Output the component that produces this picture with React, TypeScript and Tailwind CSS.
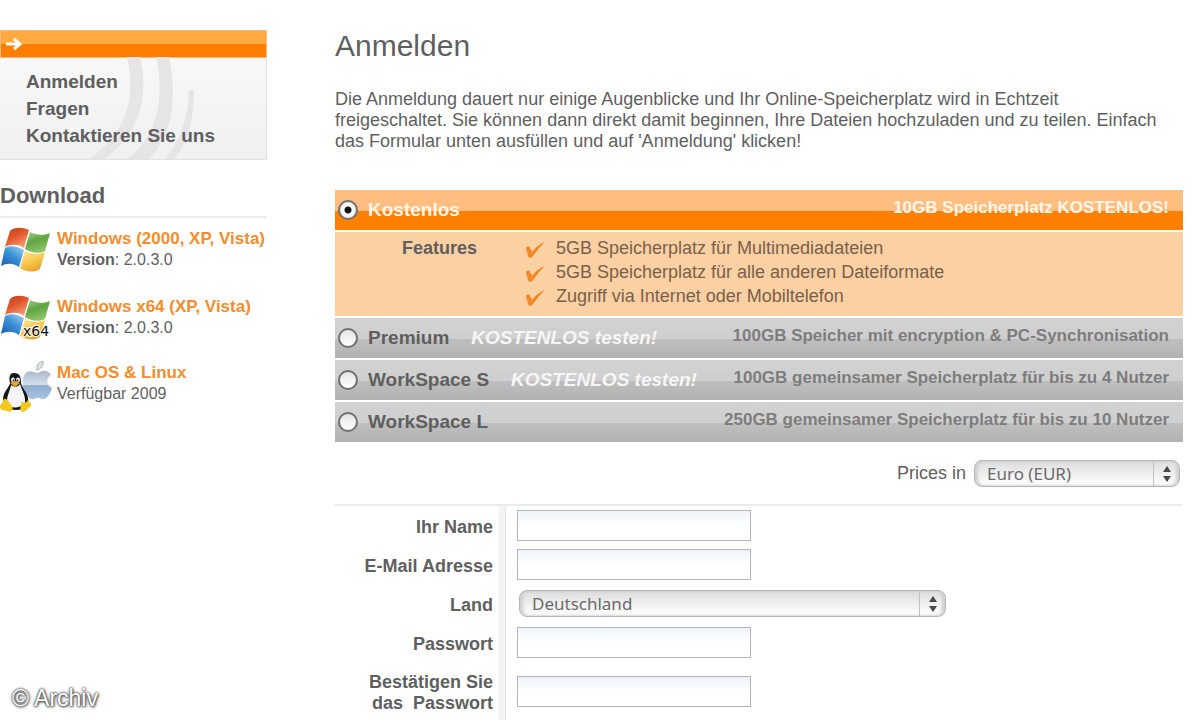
import React, { useState } from "react";

type Plan = {
  id: string;
  name: string;
  trial: boolean;
  summary: string;
};

const navLinks = ["Anmelden", "Fragen", "Kontaktieren Sie uns"];

const features = [
  "5GB Speicherplatz für Multimediadateien",
  "5GB Speicherplatz für alle anderen Dateiformate",
  "Zugriff via Internet oder Mobiltelefon",
];

const plans: Plan[] = [
  {
    id: "premium",
    name: "Premium",
    trial: true,
    summary: "100GB Speicher mit encryption & PC-Synchronisation",
  },
  {
    id: "workspace-s",
    name: "WorkSpace S",
    trial: true,
    summary: "100GB gemeinsamer Speicherplatz für bis zu 4 Nutzer",
  },
  {
    id: "workspace-l",
    name: "WorkSpace L",
    trial: false,
    summary: "250GB gemeinsamer Speicherplatz für bis zu 10 Nutzer",
  },
];

const WindowsLogo = ({ x64 = false }: { x64?: boolean }) => (
  <svg viewBox="0 0 52 48" className="h-12 w-[52px] shrink-0" aria-hidden="true">
    <defs>
      <linearGradient id="winRed" x1="0" y1="0" x2="0.6" y2="1">
        <stop offset="0" stopColor="#b8401c" />
        <stop offset="0.5" stopColor="#e2572c" />
        <stop offset="1" stopColor="#f79a70" />
      </linearGradient>
      <linearGradient id="winGreen" x1="0" y1="0" x2="0.4" y2="1">
        <stop offset="0" stopColor="#a5cf85" />
        <stop offset="0.5" stopColor="#5fa541" />
        <stop offset="1" stopColor="#8cc46a" />
      </linearGradient>
      <linearGradient id="winBlue" x1="1" y1="0" x2="0.2" y2="1">
        <stop offset="0" stopColor="#a9d4f2" />
        <stop offset="0.5" stopColor="#3c93d8" />
        <stop offset="1" stopColor="#1d62b0" />
      </linearGradient>
      <linearGradient id="winYellow" x1="0" y1="0" x2="0.5" y2="1">
        <stop offset="0" stopColor="#fbe9a2" />
        <stop offset="0.6" stopColor="#f9c84a" />
        <stop offset="1" stopColor="#e8a32c" />
      </linearGradient>
    </defs>
    <path
      d="M10 5C14 1 22 1 29 4L24 22C18 18 12 18 5 21Z"
      fill="url(#winRed)"
    />
    <path
      d="M30 6C36 9 43 10 50 7L45 25C39 28 31 27 25 23Z"
      fill="url(#winGreen)"
    />
    <path
      d="M5 22C11 19 17 20 24 24L19 41C13 37 7 37 1 40Z"
      fill="url(#winBlue)"
    />
    <path
      d="M25 25C31 28 38 29 45 26L40 43C34 47 26 46 20 42Z"
      fill="url(#winYellow)"
    />
    {x64 && (
      <text
        x="23"
        y="42"
        fontFamily="DejaVu Sans, sans-serif"
        fontSize="14"
        fill="#111"
        stroke="#fff"
        strokeWidth="2"
        paintOrder="stroke"
      >
        x64
      </text>
    )}
  </svg>
);

const MacLinuxLogo = () => (
  <svg viewBox="0 0 52 54" className="h-[54px] w-[52px] shrink-0" aria-hidden="true">
    <defs>
      <linearGradient id="apple" x1="0" y1="0" x2="0" y2="1">
        <stop offset="0" stopColor="#aab9cc" />
        <stop offset="0.5" stopColor="#d2dfec" />
        <stop offset="0.52" stopColor="#93aece" />
        <stop offset="1" stopColor="#a8c3df" />
      </linearGradient>
    </defs>
    <path d="M37 10C36 5 39 2 43 1C44 5 41 9 37 10Z" fill="#dce3e8" stroke="#a3adb5" />
    <path
      d="M37 13C40 13 42 10 45 11C48 11 50 13 51 15C46 18 46 25 52 28C50 34 47 39 43 39C41 39 39 37 37 38C34 39 32 40 29 38C23 33 20 21 25 14C29 9 33 12 37 13Z"
      fill="url(#apple)"
    />
    <path
      d="M14 13C9 13 9 18 10 23C10 27 3 31 3 40C4 47 8 50 16 50C25 50 29 46 28 38C27 32 22 28 21 23C21 17 20 13 14 13Z"
      fill="#161616"
    />
    <path
      d="M11 25C15 28 18 27 20 24C22 31 26 36 25 43C21 48 12 49 8 45C5 38 10 32 11 25Z"
      fill="#f4f4f4"
    />
    <ellipse cx="13" cy="20" rx="2" ry="2.4" fill="#eee" />
    <ellipse cx="18" cy="20" rx="2" ry="2.4" fill="#eee" />
    <circle cx="13.5" cy="20.5" r="0.9" fill="#111" />
    <circle cx="17.5" cy="20.5" r="0.9" fill="#111" />
    <path d="M10 23L15 21L20 23L15 27Z" fill="#e9a51c" />
    <path
      d="M4 39C7 38 9 43 12 46C14 50 11 53 7 51C3 50 0 50 0 47C0 44 2 44 4 39Z"
      fill="#f2c81d"
    />
    <path
      d="M22 41C24 44 26 43 28 40C30 43 32 44 31 46C28 48 26 52 22 52C19 50 21 45 22 41Z"
      fill="#f2c81d"
    />
  </svg>
);

const CheckMark = () => (
  <svg viewBox="0 0 20 18" className="mt-1 h-[18px] w-5 shrink-0" aria-hidden="true">
    <path
      d="M0 8C1 6 4 6 4 8L6 12C9 8 13 4 19 2C14 6 11 11 7 16C6 18 2 18 2 16Z"
      fill="#f08a26"
    />
  </svg>
);

const Swoosh = () => (
  <svg
    viewBox="0 0 110 102"
    className="absolute right-[66px] bottom-0 h-[102px] w-[110px]"
    fill="#e5e5e5"
    aria-hidden="true"
  >
    <path d="M37 0H50C60 42 48 78 14 102H0C34 76 47 46 37 0Z" />
    <path d="M66 0H79C88 42 82 78 59 102H38C65 80 76 46 66 0Z" />
    <path d="M99 35C100 32 103 32 104 35C104 62 98 86 84 102H75C90 84 98 62 99 35Z" />
  </svg>
);

type SelectBoxProps = {
  id: string;
  className: string;
  options: string[];
};

const SelectBox = ({ id, className, options }: SelectBoxProps) => (
  <div className={`relative ${className}`}>
    <select
      id={id}
      className="block h-[27px] w-full appearance-none rounded-lg border border-[#b5b5b5] bg-linear-to-b from-[#dcdcdc] via-[#efefef] to-white pr-8 pl-3 font-['Noto_Sans',sans-serif] text-[17px] leading-6 text-[#6a6a6a] shadow-[inset_3px_0_3px_#d0d0d0,inset_-3px_0_3px_#d0d0d0] focus:outline-none"
    >
      {options.map((option) => (
        <option key={option}>{option}</option>
      ))}
    </select>
    <span className="pointer-events-none absolute top-px right-0 flex h-[25px] w-[27px] items-center justify-center border-l border-[#c2c2c2]">
      <svg viewBox="0 0 8 16" className="h-4 w-2" fill="#484848" aria-hidden="true">
        <path d="M4 0L8 6H0Z" />
        <path d="M4 16L0 10H8Z" />
      </svg>
    </span>
  </div>
);

type PlanRadioProps = {
  id: string;
  checked: boolean;
  onChange: () => void;
};

const PlanRadio = ({ id, checked, onChange }: PlanRadioProps) => (
  <input
    type="radio"
    name="plan"
    id={id}
    checked={checked}
    onChange={onChange}
    className={`size-5 shrink-0 appearance-none rounded-full border-2 border-[#707070] ${
      checked
        ? "bg-[radial-gradient(circle,#111_3px,#fff_4px,#ededed_8px)]"
        : "bg-linear-to-b from-[#e4e4e4] to-white"
    }`}
  />
);

type FieldProps = {
  id: string;
  label: React.ReactNode;
  tall?: boolean;
  children: React.ReactNode;
};

const Field = ({ id, label, tall = false, children }: FieldProps) => (
  <div className={`flex ${tall ? "min-h-[58px]" : "min-h-[39px]"}`}>
    <div className="flex w-[171px] shrink-0 items-center justify-end border-r border-[#e6e6e6] bg-[linear-gradient(to_left,#f3f3f3_6px,#ffffff_7px)] pt-1 pr-3">
      <label htmlFor={id} className="text-right text-lg leading-[21px] font-bold">
        {label}
      </label>
    </div>
    <div className="flex grow items-center pl-[11px]">{children}</div>
  </div>
);

const inputClass =
  "h-[31px] w-[234px] border border-[#b3b5b7] bg-linear-to-b from-[#eef3f9] to-white to-50% px-2 text-base focus:outline-none";

const App = () => {
  const [plan, setPlan] = useState("free");

  return (
    <div className="relative flex min-h-screen bg-white font-['Liberation_Sans',Arial,sans-serif] text-[#5f5f5f]">
      <aside className="w-[267px] shrink-0 pt-[30px]">
        <div className="flex h-7 items-center border border-[#fbb878] bg-linear-to-b from-[#ffab42] from-50% to-[#ff7e00] to-50% pl-1">
          <svg viewBox="0 0 18 14" className="h-3.5 w-[18px]" aria-hidden="true">
            <path
              d="M1 7H14M9 2L15 7L9 12"
              fill="none"
              stroke="#fff"
              strokeWidth="3"
            />
          </svg>
        </div>
        <nav className="relative border-r border-b border-[#e2e2e2] bg-linear-to-b from-[#f8f8f8] to-[#f0f0f0] pt-2.5 pb-2.5 pl-[26px]">
          <Swoosh />
          <ul className="relative">
            {navLinks.map((link) => (
              <li key={link} className="text-[19px] leading-[27px] font-bold">
                <a href="#">{link}</a>
              </li>
            ))}
          </ul>
        </nav>

        <h2 className="mt-[22px] border-b-2 border-[#ececec] pb-1.5 text-[22px] leading-7 font-bold">
          Download
        </h2>
        <ul className="pt-2">
          <li className="flex gap-[5px] pb-5">
            <WindowsLogo />
            <p className="pt-0.5 text-base leading-[21px]">
              <a href="#" className="text-[17px] font-bold text-[#f58d2c]">
                Windows (2000, XP, Vista)
              </a>
              <br />
              <b>Version</b>: 2.0.3.0
            </p>
          </li>
          <li className="flex gap-[5px] pb-[18px]">
            <WindowsLogo x64 />
            <p className="pt-0.5 text-base leading-[21px]">
              <a href="#" className="text-[17px] font-bold text-[#f58d2c]">
                Windows x64 (XP, Vista)
              </a>
              <br />
              <b>Version</b>: 2.0.3.0
            </p>
          </li>
          <li className="flex gap-[5px]">
            <MacLinuxLogo />
            <p className="pt-0.5 text-base leading-[21px]">
              <a href="#" className="text-[17px] font-bold text-[#f58d2c]">
                Mac OS &amp; Linux
              </a>
              <br />
              Verfügbar 2009
            </p>
          </li>
        </ul>
      </aside>

      <main className="ml-[68px] grow pt-7 pr-[17px]">
        <h1 className="text-3xl leading-9">Anmelden</h1>
        <p className="mt-[25px] pr-3 text-lg leading-[21px]">
          Die Anmeldung dauert nur einige Augenblicke und Ihr Online-Speicherplatz
          wird in Echtzeit freigeschaltet. Sie können dann direkt damit beginnen,
          Ihre Dateien hochzuladen und zu teilen. Einfach das Formular unten
          ausfüllen und auf 'Anmeldung' klicken!
        </p>

        <form onSubmit={(e) => e.preventDefault()}>
          <div className="mt-[38px] flex flex-col gap-0.5">
            <div className="flex h-10 items-center bg-linear-to-b from-[#ffbd80] from-52% to-[#ff7f00] to-52% pr-3.5 pl-[3px] text-[#fff6ea]">
              <PlanRadio
                id="free"
                checked={plan === "free"}
                onChange={() => setPlan("free")}
              />
              <label htmlFor="free" className="ml-2.5 text-[19px] font-bold">
                Kostenlos
              </label>
              <span className="ml-auto pb-1 text-[17px] font-bold">
                10GB Speicherplatz KOSTENLOS!
              </span>
            </div>
            <div className="flex min-h-[84px] bg-[#fbd0a2] pt-1 text-lg leading-6">
              <h3 className="w-[142px] text-right font-bold">Features</h3>
              <ul className="pl-[49px] text-[#7a604b]">
                {features.map((feature) => (
                  <li key={feature} className="flex gap-2.5">
                    <CheckMark />
                    {feature}
                  </li>
                ))}
              </ul>
            </div>
            {plans.map((item) => (
              <div
                key={item.id}
                className="flex h-10 items-center bg-[linear-gradient(#d2d2d2,#cfcfcf_52%,#bfbfbf_52%,#b2b2b2)] pr-3.5 pl-[3px]"
              >
                <PlanRadio
                  id={item.id}
                  checked={plan === item.id}
                  onChange={() => setPlan(item.id)}
                />
                <label htmlFor={item.id} className="ml-2.5 text-[19px] font-bold">
                  {item.name}
                </label>
                {item.trial && (
                  <em className="ml-[22px] text-[19px] font-bold text-[#f6f6f6]">
                    KOSTENLOS testen!
                  </em>
                )}
                <span className="ml-auto pb-1 text-[17px] font-bold text-[#7d7d7d]">
                  {item.summary}
                </span>
              </div>
            ))}
          </div>

          <div className="mt-[18px] flex items-center justify-end pr-[3px]">
            <label htmlFor="currency" className="mr-2 text-lg leading-[27px]">
              Prices in
            </label>
            <SelectBox
              id="currency"
              className="w-[206px]"
              options={["Euro (EUR)", "US Dollar (USD)"]}
            />
          </div>

          <div className="mt-[17px] border-t-2 border-[#ebebeb]">
            <Field id="name" label="Ihr Name">
              <input id="name" type="text" className={inputClass} />
            </Field>
            <Field id="email" label="E-Mail Adresse">
              <input id="email" type="email" className={inputClass} />
            </Field>
            <Field id="country" label="Land">
              <SelectBox
                id="country"
                className="ml-0.5 w-[427px]"
                options={["Deutschland", "Österreich", "Schweiz"]}
              />
            </Field>
            <Field id="password" label="Passwort">
              <input id="password" type="password" className={inputClass} />
            </Field>
            <Field
              id="confirm"
              tall
              label={
                <>
                  Bestätigen Sie
                  <br />
                  das&nbsp; Passwort
                </>
              }
            >
              <input id="confirm" type="password" className={inputClass} />
            </Field>
          </div>
        </form>
      </main>

      <p className="absolute bottom-2 left-3 text-[23px] leading-7 text-white [text-shadow:0_0_2px_#333,0_0_3px_#555,1px_1px_3px_#555]">
        © Archiv
      </p>
    </div>
  );
};

export default App;
